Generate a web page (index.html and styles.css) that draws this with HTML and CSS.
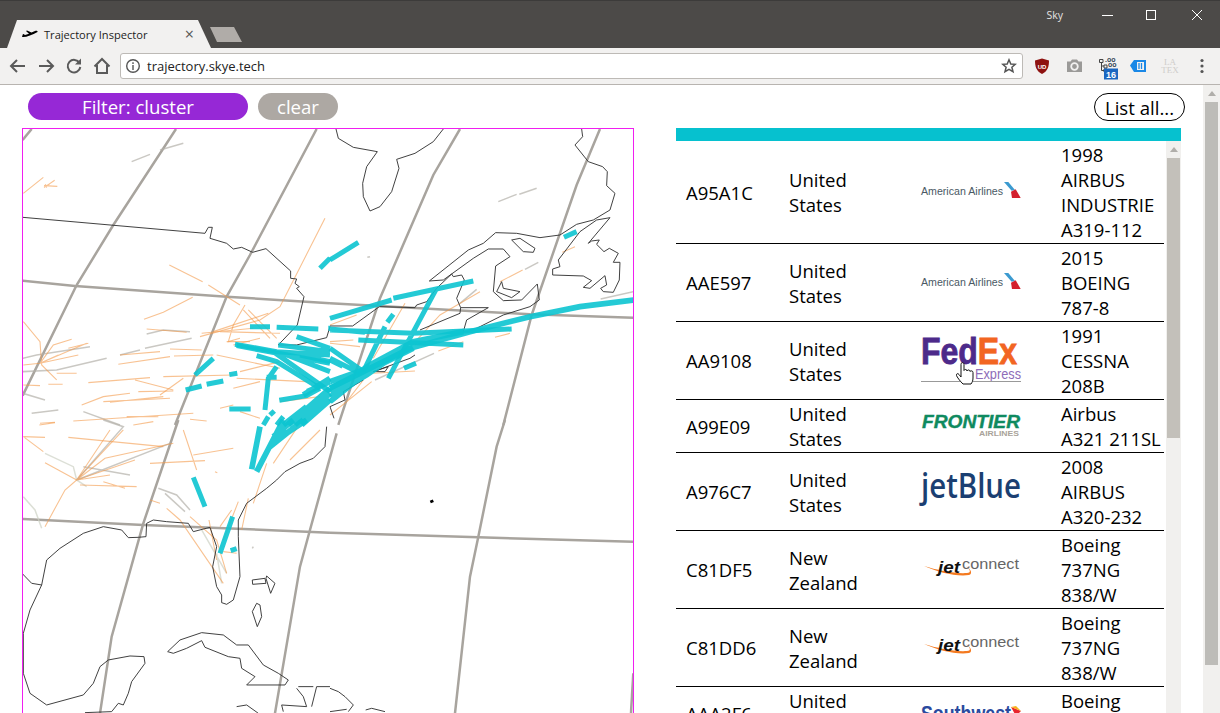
FILE: index.html

```html
<!DOCTYPE html>
<html lang="en">
<head>
    <meta charset="UTF-8">
    <meta name="viewport" content="width=device-width, initial-scale=1.0">
    <title>Trajectory Inspector</title>
    <link rel="stylesheet" href="styles.css">
</head>
<body>
    <div class="titlebar">
        <div class="tab">
            <svg class="favicon" viewBox="0 0 16 10"><path d="M0 8C4 8.500 10 6 15.500 3 16 2 14.500 1.500 13 2L9.500 3.500 5 1.500 4 2 7 4.700 3 6 1.500 5 0.800 5.300Z"/></svg>
            <span class="tab-title">Trajectory Inspector</span>
            <span class="tab-close">&times;</span>
        </div>
        <div class="newtab"></div>
        <span class="account">Sky</span>
        <div class="winctl">
            <svg viewBox="0 0 45 30"><path d="M18 14.500H29"/></svg>
            <svg viewBox="0 0 45 30"><rect x="17.500" y="9.500" width="9" height="9"/></svg>
            <svg viewBox="0 0 45 30"><path d="M18 9 28 19M28 9 18 19"/></svg>
        </div>
    </div>

    <div class="toolbar">
        <div class="nav">
            <svg viewBox="0 0 28 28"><path d="M21 14H7M13 8 7 14 13 20"/></svg>
            <svg viewBox="0 0 28 28"><path d="M7 14H21M15 8 21 14 15 20"/></svg>
            <svg viewBox="0 0 28 28"><path d="M19.500 11A6.300 6.300 0 1 0 20.300 15"/><path class="solid" d="M21 6.500V12.500H15Z"/></svg>
            <svg viewBox="0 0 28 28"><path d="M6.500 14.500 14 7 21.500 14.500M9 13V21H19V13"/></svg>
        </div>
        <div class="address">
            <svg class="info" viewBox="0 0 16 16"><circle cx="8" cy="8" r="6.300"/><path d="M8 7V12M8 4.200V6"/></svg>
            <span class="url">trajectory.skye.tech</span>
            <svg class="star" viewBox="0 0 16 16"><path d="M8 1.800 9.800 6 14.300 6.300 10.900 9.200 12 13.700 8 11.300 4 13.700 5.100 9.200 1.700 6.300 6.200 6Z"/></svg>
        </div>
        <div class="extensions">
            <svg viewBox="0 0 32 32"><path fill="#8e1210" d="M16 8.500 23 10.500C23 16 22 21 16 24 10 21 9 16 9 10.500Z"/><text class="ext-ub" x="16" y="18.500">UD</text></svg>
            <svg viewBox="0 0 32 32"><path fill="#9b9a98" d="M9 11.500H12.500L14 9.500H19L20.500 11.500H24V22H9Z"/><circle cx="16.500" cy="16.500" r="3.300" fill="none" stroke="#f2f1f0" stroke-width="1.800"/></svg>
            <svg viewBox="0 0 32 32"><path fill="none" stroke="#444" d="M9.500 9.500H13V12.500H9.500ZM11.500 12.500V20.500H14M11.500 16H14M14 15H17V18H14ZM14 19H17V22H14Z"/><text class="ext-tree" x="15" y="12">.oo</text><text class="ext-tree" x="18" y="17">oo</text><rect x="14" y="18.500" width="14" height="11" fill="#1a66c0"/><text class="ext-badge" x="21" y="27.500">16</text></svg>
            <svg viewBox="0 0 32 32"><path fill="#1a88e6" d="M8 15.500 12 10H24V22H12Z"/><rect x="15" y="12" width="7" height="8" fill="#f2f1f0"/><path stroke="#1a88e6" stroke-width="1.300" d="M17 13V19M19.500 13V19"/></svg>
            <svg viewBox="0 0 32 32"><text class="ext-latex" x="16" y="15">LA</text><text class="ext-latex" x="16" y="23">TEX</text></svg>
            <svg viewBox="0 0 32 32"><circle cx="16" cy="10.500" r="1.600" fill="#555"/><circle cx="16" cy="16" r="1.600" fill="#555"/><circle cx="16" cy="21.500" r="1.600" fill="#555"/></svg>
        </div>
    </div>

    <div class="viewport">
        <div class="page">
            <div class="filters">
                <button class="btn btn-filter">Filter: cluster</button>
                <button class="btn btn-clear">clear</button>
                <button class="btn btn-list">List all...</button>
            </div>
            <div class="content">
                <div class="map">
                    <svg viewBox="23 129 610 584" width="610" height="584">
                        <g class="grat">
                            <g class="z3">
                                <path d="M35 12 8 45"/>
                                <path d="M468 12 280 300 170 480 8 812"/>
                                <path d="M890 12 690 390 620 515 465 900"/>
                                <path d="M8 467 165 483 620 515 930 535"/>
                            </g>
                            <g class="z4">
                                <path d="M390 12 310 150 150 520 25 900"/>
                                <path d="M810 12 740 180 605 570 520 900"/>
                                <path d="M0 535 600 568 910 578"/>
                            </g>
                            <g class="z5">
                                <path d="M475 0 370 310 275 650 240 880"/>
                                <path d="M950 40 870 330 840 440 765 880"/>
                                <path d="M8 297 370 315 930 338"/>
                            </g>
                            <g class="z6">
                                <path d="M525 0 500 80 445 350 420 470 375 880"/>
                                <path d="M0 338 445 352 910 365"/>
                                <path d="M910 760 903 880"/>
                            </g>
                        </g>
                        <g class="tracks-grey">
                            <g class="z3">
                                <path d="M335 110 390 88M420 75 490 55"/>
                                <path d="M380 627 430 615 510 620M300 690 360 675M375 670 515 640"/>
                                <path d="M8 700 50 690 210 665M8 740 110 735 260 700M8 805 75 825M35 865 115 855M190 860 300 900"/>
                            </g>
                            <g class="z4">
                                <path d="M505 230 560 208M568 208 620 190M812 522 910 500M625 412 585 433"/>
                                <path d="M440 493 390 535M312 685 135 765M112 397 120 395"/>
                            </g>
                            <g class="z5">
                                <path d="M250 0 310 20 170 180 450 70M190 140 330 165M415 205 470 225 510 270M435 220 495 275"/>
                                <path class="pale" d="M10 230 45 270 65 325M75 100 160 140 170 180 200 200M545 330 620 460M605 490 590 400"/>
                                <path d="M697 385 700 380"/>
                            </g>
                        </g>
                        <g class="tracks-orange">
                            <g class="z3">
                                <path d="M10 205 70 157M72 188 104 166M72 186 90 176M72 182 112 184M76 178 80 188"/>
                                <path d="M448 420 548 470M565 480 660 540M372 583 430 562 518 517M915 280 780 545 720 585 540 635"/>
                                <path d="M675 540 640 600 625 650 660 640M670 555 750 640M685 555 770 640M380 612 500 622M600 620 780 625M545 625 700 610M640 660 720 640"/>
                                <path d="M10 590 60 650 65 720 110 765M10 720 60 715 175 690M60 715 100 660 155 643M60 715 200 655M60 715 115 690M145 670 205 655"/>
                                <path d="M295 718 450 695M462 693 580 690M450 672 545 675M300 690 420 680M205 773 390 758M345 765 460 795M185 840 250 815 330 805M250 830 450 820M270 832 430 815M355 800 460 798"/>
                                <path d="M320 875 415 875M160 888 520 865M430 755 640 750M420 810 490 760M590 690 780 730M10 780 60 782M85 778 128 778M110 745 170 745M60 895 105 892M510 883 560 888"/>
                                <path d="M580 620 745 565M620 650 690 650M660 740 780 710M650 760 860 770M600 850 640 840M660 860 720 880M780 830 900 815M640 790 720 770"/>
                            </g>
                            <g class="z4">
                                <path d="M225 535 130 700M450 500 330 570 265 640M578 435 510 470M540 625 495 637M735 365 697 382M400 650 325 678"/>
                                <path d="M0 650 70 645M0 655 90 665M255 738 130 745M125 770 0 870M80 570 0 600M100 765 50 830"/>
                            </g>
                            <g class="z5">
                                <path d="M170 180 270 30M170 180 310 30M170 180 255 115 460 70M170 180 345 120M170 180 270 165M180 195 350 200M250 185 315 205M170 180 135 210 75 320M10 50 70 95M10 50 75 52"/>
                                <path d="M145 52 430 80M490 30 530 150M520 105 640 85M390 130 555 122M75 128 170 180M390 240 420 250M440 265 480 300 610 490M510 290 590 360 620 460M600 320 635 270"/>
                                <path d="M655 245 610 360M685 235 665 330M740 130 700 250M830 25 760 130M900 30 810 120M585 155 592 158M567 300 590 420M610 395 650 400M58 15 105 8M340 15 400 5"/>
                            </g>
                        </g>
                        <g class="coast">
                            <g class="z3">
                                <path d="M8 277 555 325 565 307 577 307 570 340 620 355 640 372 665 367 698 382 738 371 812 438 812 460 830 462 825 475 838 485 830 490 852 515 832 600 775 660 830 660 920 638 930 605"/>
                            </g>
                            <g class="z4">
                                <path d="M0 603 68 603 148 545 255 548 260 540 290 530 320 490 365 447 370 455 395 450 403 465 380 520 392 548 390 565 270 615"/>
                                <path d="M298 468 415 375 460 355 497 323 560 325 630 338 690 330 740 298 790 285 840 255 855 205 830 182 832 140 818 125 775 110 735 60 758 35 755 12"/>
                                <path d="M298 468 340 465 430 400 475 372 520 372 540 395 497 423 490 500 520 527 575 525 622 477 628 525 600 545 520 570 440 610 415 620 400 620 410 585 475 548 392 548"/>
                                <path d="M18 12 25 40 70 67 142 80 110 125 98 175 100 215 120 258 150 245 185 200 207 130 200 103 255 85 310 50 340 12"/>
                                <path d="M545 345 570 340 615 370 610 382 580 380Z"/>
                                <path d="M500 500 515 470 520 490 570 500 545 518Z"/>
                                <path d="M775 355 840 278 800 285 750 320 685 405 690 425 668 432 668 450 760 453 785 467 760 487 780 490 825 452 830 480 812 490 820 500 850 502 868 465 870 412 850 412 865 385 838 370 822 380 800 358 808 345 785 348Z"/>
                                <path d="M255 690 240 700 130 740 175 725 165 740 130 740M100 765 40 800 45 825 0 845 12 880"/>
                            </g>
                            <g class="z5">
                                <path d="M920 20 915 80 880 115 840 130 795 155 770 180 740 205 680 250 655 300 655 350 660 470 640 540 620 553 605 548 605 525 590 500 578 440 590 380 570 322 520 335 505 310 440 305 400 300 380 310 378 350 355 352 325 353 305 330 250 320 190 340 120 385 80 420 65 495 30 570 10 640 10 760 30 820 80 855 190 825 220 790 240 740 265 720 330 708 372 710 375 730 335 785 325 820 310 855 295 850 275 875 195 878"/>
                                <path d="M8 462 35 490 65 495"/>
                                <path d="M443 695 480 660 545 638 610 645 650 675 685 675 730 735 775 760 805 780 795 795 680 795 705 770 665 745 660 715 625 710 555 682 545 662 500 685 460 700Z"/>
                                <path d="M697 480 735 475 738 490 698 493Z"/>
                                <path d="M740 468 765 490 752 520 738 475Z"/>
                                <path d="M697 575 710 550 720 555 725 590 712 620Z"/>
                                <path d="M930 800 890 800 875 860M835 800 880 800M830 805 850 830 860 860 785 855 790 875M650 860 680 855 715 880"/>
                            </g>
                            <g class="z6">
                                <path d="M0 805 25 815 45 830 70 855 55 875M0 875 50 868M107 870 125 865 165 875"/>
                                <path class="bermuda" d="M301 246 310 242"/>
                            </g>
                        </g>
                        <g class="tracks-teal">
                            <g class="z3">
                                <path d="M690 605H750M770 607 895 612M925 610H930"/>
                                <path d="M645 658 770 680 930 690M710 692 770 710 900 790M775 660 930 680M830 635 930 670M840 690 930 710"/>
                                <path d="M650 662 790 688 930 715M760 680 930 800M800 690 930 740"/>
                                <path d="M580 700 525 750M652 745 628 749M610 768 560 778M545 783 497 795"/>
                                <path d="M770 725 745 760 735 855M740 757H770M628 852H692M778 826 860 812 900 790"/>
                                <path d="M763 858 750 870M745 875 730 900M790 875 770 900"/>
                                <path class="wide" d="M805 900 930 790M825 900 930 805M845 900 930 825M862 800 930 770M790 900 860 845M850 810 930 760"/>
                                <path d="M900 430 930 400"/>
                            </g>
                            <g class="z4">
                                <path class="wide" d="M910 525 750 545 600 575 420 620 240 670 100 740 0 790"/>
                                <path d="M430 468 190 520M185 525 0 580M320 490 175 760M545 612 250 625 0 615M400 660 85 645M105 622 0 612M165 605 100 740M190 568 172 592M258 715 222 730"/>
                                <path d="M85 352 0 405M740 320 702 337M38 724 0 705M0 670 100 740M0 700 90 745"/>
                                <path class="wide" d="M0 770 100 735 220 680M0 800 120 720 250 650 400 620M0 815 110 750 240 660M0 790 100 745 250 670M0 830 100 750"/>
                            </g>
                            <g class="z5">
                                <path class="wide" d="M720 20 695 148M790 0 710 155M850 0 750 80M820 0 760 50M800 30 750 75M860 0 770 60"/>
                                <path d="M520 172 555 260M638 290 600 400M632 392 650 386"/>
                            </g>
                        </g>
                    </svg>
                </div>
                <div class="panel">
                    <div class="panel-head"></div>
                    <div class="panel-body">
                        <div class="table-wrap">
                            <table class="planes">
                                <tr>
                                    <td class="c-id">A95A1C</td>
                                    <td class="c-country">United States</td>
                                    <td class="c-logo">
                                        <svg class="logo" viewBox="0 0 100 20" height="20">
                                            <text class="l-aa" x="0" y="13" textLength="82" lengthAdjust="spacingAndGlyphs">American Airlines</text>
                                            <path fill="#3b9ad0" d="M83 0 87.300 0 94 8 90.700 8.700Z"/><path fill="#d3202e" d="M90 9.700 94.700 7.300 99.700 16 91 16Z"/>
                                        </svg>
                                    </td>
                                    <td class="c-model">1998 AIRBUS INDUSTRIE A319-112</td>
                                </tr>
                                <tr>
                                    <td class="c-id">AAE597</td>
                                    <td class="c-country">United States</td>
                                    <td class="c-logo">
                                        <svg class="logo" viewBox="0 0 100 20" height="20">
                                            <text class="l-aa" x="0" y="13" textLength="82" lengthAdjust="spacingAndGlyphs">American Airlines</text>
                                            <path fill="#3b9ad0" d="M83 0 87.300 0 94 8 90.700 8.700Z"/><path fill="#d3202e" d="M90 9.700 94.700 7.300 99.700 16 91 16Z"/>
                                        </svg>
                                    </td>
                                    <td class="c-model">2015 BOEING 787-8</td>
                                </tr>
                                <tr>
                                    <td class="c-id">AA9108</td>
                                    <td class="c-country">United States</td>
                                    <td class="c-logo">
                                        <svg class="logo" viewBox="0 0 100 50" height="50">
                                            <text class="l-fedex" x="0" y="28" textLength="96" lengthAdjust="spacingAndGlyphs"><tspan fill="#4d2a8a" stroke="#4d2a8a">Fed</tspan><tspan fill="#f26522" stroke="#f26522">Ex</tspan></text>
                                            <text class="l-express" x="54" y="42.500" textLength="46" lengthAdjust="spacingAndGlyphs">Express</text>
                                            <path stroke="#999" d="M0 45.500H100"/>
                                            <path class="hand" d="M41 47C39 45 36 41 35.500 39.500 35 37.500 37 37 38 38.500L40 41V28.500C40 26 43 26 43 28.500V34.500C43.500 33 46 33 46 35 46.500 33.500 49 33.500 49 35.500 49.500 34.500 52 34.500 52 36.500V42C52 45 51 46.500 50 48H42Z"/>
                                        </svg>
                                    </td>
                                    <td class="c-model">1991 CESSNA 208B</td>
                                </tr>
                                <tr>
                                    <td class="c-id">A99E09</td>
                                    <td class="c-country">United States</td>
                                    <td class="c-logo">
                                        <svg class="logo" viewBox="0 0 100 24" height="24">
                                            <text class="l-frontier" x="1" y="14" textLength="98" lengthAdjust="spacingAndGlyphs">FRONTIER</text>
                                            <text class="l-frontier-sub" x="58" y="21.500" textLength="40" lengthAdjust="spacingAndGlyphs">AIRLINES</text>
                                        </svg>
                                    </td>
                                    <td class="c-model">Airbus<br>A321 211SL</td>
                                </tr>
                                <tr>
                                    <td class="c-id">A976C7</td>
                                    <td class="c-country">United States</td>
                                    <td class="c-logo">
                                        <svg class="logo" viewBox="0 0 100 50" height="50">
                                            <text class="l-jetblue" x="0" y="31" textLength="100" lengthAdjust="spacingAndGlyphs">jetBlue</text>
                                        </svg>
                                    </td>
                                    <td class="c-model">2008 AIRBUS A320-232</td>
                                </tr>
                                <tr>
                                    <td class="c-id">C81DF5</td>
                                    <td class="c-country">New Zealand</td>
                                    <td class="c-logo">
                                        <svg class="logo" viewBox="0 0 100 30" height="30">
                                            <path class="swoosh" d="M3 11C16 17 36 22 48 20 52 19 50 14 45 11 50 15 50 18 46 18 34 19 16 15 3 11Z"/>
                                            <text class="l-jet" x="17" y="18" textLength="22" lengthAdjust="spacingAndGlyphs">jet</text>
                                            <text class="l-connect" x="41" y="14" textLength="57" lengthAdjust="spacingAndGlyphs">connect</text>
                                        </svg>
                                    </td>
                                    <td class="c-model">Boeing 737NG 838/W</td>
                                </tr>
                                <tr>
                                    <td class="c-id">C81DD6</td>
                                    <td class="c-country">New Zealand</td>
                                    <td class="c-logo">
                                        <svg class="logo" viewBox="0 0 100 30" height="30">
                                            <path class="swoosh" d="M3 11C16 17 36 22 48 20 52 19 50 14 45 11 50 15 50 18 46 18 34 19 16 15 3 11Z"/>
                                            <text class="l-jet" x="17" y="18" textLength="22" lengthAdjust="spacingAndGlyphs">jet</text>
                                            <text class="l-connect" x="41" y="14" textLength="57" lengthAdjust="spacingAndGlyphs">connect</text>
                                        </svg>
                                    </td>
                                    <td class="c-model">Boeing 737NG 838/W</td>
                                </tr>
                                <tr>
                                    <td class="c-id">AAA2F6</td>
                                    <td class="c-country">United States</td>
                                    <td class="c-logo">
                                        <svg class="logo" viewBox="0 0 100 24" height="24">
                                            <text class="l-southwest" x="0" y="20" textLength="90" lengthAdjust="spacingAndGlyphs">Southwest</text>
                                            <path fill="#e8252e" d="M90 6 100 10 95 15Z"/><path fill="#f8b21c" d="M90 6 95 5 100 10Z"/>
                                        </svg>
                                    </td>
                                    <td class="c-model">Boeing<br>737-7H4</td>
                                </tr>
                            </table>
                        </div>
                        <div class="scroll scroll-inner">
                            <div class="scroll-up"></div>
                            <div class="scroll-thumb"></div>
                        </div>
                    </div>
                </div>
            </div>
        </div>
        <div class="scroll scroll-outer">
            <div class="scroll-up"></div>
            <div class="scroll-thumb"></div>
        </div>
    </div>
</body>
</html>
```

FILE: styles.css

```css
html, body {
    height: 100%;
}

body {
    margin: 0;
    display: flex;
    flex-direction: column;
    overflow: hidden;
    font-family: "Open Sans", sans-serif;
    background: #fff;
    color: #000;
}

/* browser window */
.titlebar {
    height: 47px;
    flex: none;
    display: flex;
    align-items: flex-start;
    padding-left: 7px;
    background: #4c4a48;
    border-top: 1px solid #3c3b3a;
}

.tab {
    width: 204px;
    height: 28px;
    margin-top: 19px;
    display: flex;
    align-items: center;
    background: #f2f1f0;
    clip-path: polygon(0 100%, 10px 0, 191px 0, 204px 100%);
}

.favicon {
    width: 16px;
    height: 10px;
    margin-left: 15px;
    margin-right: 6px;
    flex: none;
}

.tab-title {
    font-size: 11.100px;
    color: #222;
    flex: 1;
    white-space: nowrap;
}

.tab-close {
    font-size: 16px;
    color: #555;
    margin-right: 17px;
    line-height: 1;
}

.newtab {
    width: 32px;
    height: 15px;
    margin-top: 26px;
    margin-left: -1px;
    background: #b0aca8;
    clip-path: polygon(0 0, 24px 0, 32px 100%, 7px 100%);
}

.account {
    margin-left: auto;
    margin-top: 7px;
    margin-right: 21px;
    font-size: 10.500px;
    color: #e4e3e2;
}

.winctl {
    display: flex;
    margin-right: 1px;
}

.winctl svg {
    width: 45px;
    height: 30px;
    fill: none;
    stroke: #fff;
    stroke-width: 1;
}

.toolbar {
    height: 36px;
    flex: none;
    display: flex;
    align-items: center;
    background: #f2f1f0;
    border-bottom: 1px solid #b8b4b0;
}

.nav {
    display: flex;
    padding-left: 4px;
}

.nav svg {
    width: 28px;
    height: 28px;
    fill: none;
    stroke: #5a5a5a;
    stroke-width: 2;
}

.nav .solid {
    fill: #5a5a5a;
    stroke: none;
}

.address {
    width: 903px;
    height: 26px;
    margin-left: 4px;
    box-sizing: border-box;
    display: flex;
    align-items: center;
    background: #fff;
    border: 1px solid #bdbab6;
    border-radius: 3px;
}

.info {
    width: 16px;
    height: 16px;
    margin-left: 4px;
    margin-right: 6px;
    fill: none;
    stroke: #555;
    stroke-width: 1.400;
}

.url {
    font-size: 13px;
    color: #222;
    flex: 1;
}

.star {
    width: 16px;
    height: 16px;
    margin-right: 5px;
    fill: none;
    stroke: #555;
    stroke-width: 1.500;
}

.extensions {
    display: flex;
    margin-left: 3px;
}

.extensions svg {
    width: 32px;
    height: 32px;
}

.extensions text {
    font-family: "Liberation Sans", sans-serif;
    text-anchor: middle;
}

.ext-ub {
    font-size: 6px;
    font-weight: bold;
    fill: #fff;
}

.extensions .ext-tree {
    font-size: 7px;
    font-weight: bold;
    fill: #345;
    text-anchor: start;
}

.ext-badge {
    font-size: 9px;
    font-weight: bold;
    fill: #fff;
}

.extensions .ext-latex {
    font-family: "Liberation Serif", serif;
    font-size: 9px;
    fill: #cfcdca;
}

/* page */
.viewport {
    flex: 1;
    min-height: 0;
    display: flex;
}

.page {
    flex: 1;
    min-width: 0;
    overflow: hidden;
}

.filters {
    display: flex;
    align-items: flex-start;
    padding: 8px 18px 0 28px;
    height: 28px;
}

.btn {
    height: 27px;
    padding: 0;
    border: none;
    border-radius: 14px;
    font-family: inherit;
    font-size: 18.600px;
    line-height: 27px;
    color: #fff;
}

.btn-filter {
    width: 220px;
    background: #9628d6;
}

.btn-clear {
    width: 80px;
    margin-left: 10px;
    background: #ada8a3;
}

.btn-list {
    width: 91px;
    height: 28px;
    margin-left: auto;
    box-sizing: border-box;
    background: #fff;
    border: 1px solid #000;
    color: #000;
}

.content {
    display: flex;
    align-items: flex-start;
    margin-top: 7px;
    padding-left: 22px;
}

.map {
    flex: none;
    width: 610px;
    height: 584px;
    border: 1px solid #f01ff0;
    border-bottom: none;
}

.map svg {
    display: block;
}

.map path {
    fill: none;
}

.z3 {
    transform: translate(20px, 125px) scale(0.3333);
}

.z4 {
    transform: translate(330px, 125px) scale(0.3333);
}

.z5 {
    transform: translate(20px, 420px) scale(0.3333);
}

.z6 {
    transform: translate(330px, 420px) scale(0.3333);
}

.grat path {
    stroke: #a8a49e;
    stroke-width: 7.500;
}

.coast path {
    stroke: #333;
    stroke-width: 2.800;
}

.coast .bermuda {
    stroke: #000;
    stroke-width: 8;
}

.tracks-orange path {
    stroke: #f39a4a;
    stroke-opacity: 0.6;
    stroke-width: 3.300;
}

.tracks-grey path {
    stroke: #b4b1aa;
    stroke-opacity: 0.7;
    stroke-width: 4.500;
}

.tracks-grey .pale {
    stroke: #cdd2c4;
}

.tracks-teal path {
    stroke: #0cc4d0;
    stroke-opacity: 0.9;
    stroke-width: 15;
}

.tracks-teal .wide {
    stroke-width: 17;
}

.panel {
    flex: none;
    width: 505px;
    margin-left: 42px;
}

.panel-head {
    height: 13px;
    background: #06c1cf;
}

.panel-body {
    display: flex;
    height: 572px;
}

.table-wrap {
    width: 488px;
    overflow: hidden;
}

.planes {
    width: 488px;
    table-layout: fixed;
    border-collapse: collapse;
    font-size: 18.500px;
    line-height: 25px;
}

.planes td {
    padding: 1px 10px;
    border-bottom: 1px solid #000;
}

.c-id {
    width: 83px;
}

.c-country {
    width: 102px;
}

.c-logo {
    width: 130px;
}

.planes .c-model {
    width: 103px;
    padding-right: 0;
}

.logo {
    display: block;
    width: 100px;
    margin-left: 10px;
    overflow: visible;
}

.logo text {
    font-family: "Liberation Sans", sans-serif;
}

.l-aa {
    font-size: 11px;
    fill: #4a5964;
}

.l-fedex {
    font-size: 36px;
    font-weight: bold;
    stroke-width: 0.800;
}

.l-express {
    font-size: 15px;
    fill: #8e6cb8;
}

.hand {
    fill: #fff;
    stroke: #111;
    stroke-width: 1;
}

.l-frontier {
    font-size: 18px;
    font-weight: bold;
    font-style: italic;
    fill: #0f8a5f;
    stroke: #0f8a5f;
    stroke-width: 0.400;
}

.l-frontier-sub {
    font-size: 7.500px;
    font-weight: bold;
    fill: #a9a39a;
}

.logo .l-jetblue {
    font-family: "Open Sans", sans-serif;
    font-size: 35px;
    font-weight: 600;
    fill: #1b3f72;
}

.swoosh {
    fill: #f47a20;
}

.l-jet {
    font-size: 16px;
    font-weight: bold;
    font-style: italic;
    fill: #111;
}

.l-connect {
    font-size: 15px;
    fill: #666;
}

.l-southwest {
    font-size: 22px;
    font-weight: bold;
    fill: #2a4a9e;
}

/* scrollbars */
.scroll {
    flex: none;
    background: #f1f0ee;
}

.scroll-up {
    width: 0;
    height: 0;
    margin: 0 auto;
    border: 4px solid transparent;
    border-top: none;
    border-bottom: 5px solid #b0aeaa;
}

.scroll-inner {
    width: 15px;
    margin-left: 2px;
    padding-top: 6px;
    box-sizing: border-box;
}

.scroll-inner .scroll-thumb {
    width: 13px;
    height: 280px;
    margin: 6px 0 0 1px;
    background: #c3c0ba;
}

.scroll-outer {
    width: 17px;
    padding-top: 6px;
    box-sizing: border-box;
}

.scroll-outer .scroll-thumb {
    width: 13px;
    height: 563px;
    margin: 6px 0 0 2px;
    background: #bdbcb8;
}
```
